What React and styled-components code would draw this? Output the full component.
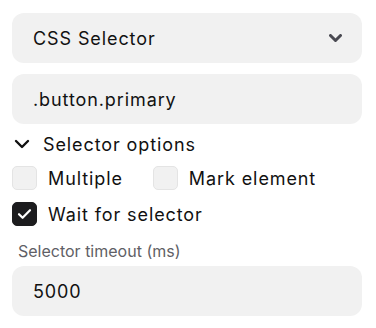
import React, { useState } from "react";
import styled, { createGlobalStyle } from "styled-components";

const GlobalStyle = createGlobalStyle`
  body {
    margin: 0;
    background: #ffffff;
    font-family: Inter, "Noto Sans", sans-serif;
    color: #111111;
  }
`;

const Panel = styled.div`
  width: 350px;
  padding: 13px 0 0 12px;
  display: flex;
  flex-direction: column;
`;

const Field = styled.div`
  height: 50px;
  border-radius: 12px;
  background: #f1f1f1;
  display: flex;
  align-items: center;
  justify-content: space-between;
  padding: 0 20px 0 21px;
  box-sizing: border-box;
  font-size: 18px;
  letter-spacing: 0.9px;
  color: #111;
  margin-bottom: ${(p) => p.$gap || 0}px;
`;

const Caret = styled.svg`
  width: 13px;
  height: 9px;
  color: #4a4a52;
`;

const OptionsToggle = styled.div`
  display: flex;
  align-items: center;
  gap: 13px;
  height: 24px;
  margin-top: 8px;
  padding-left: 2px;
  font-size: 18px;
  letter-spacing: 0.9px;
  color: #111;
`;

const Row = styled.div`
  display: flex;
  align-items: center;
  gap: 30px;
  margin-top: ${(p) => p.$top}px;
`;

const Check = styled.label`
  display: flex;
  align-items: center;
  gap: 11px;
  font-size: 18px;
  letter-spacing: 0.9px;
  color: #111;
`;

const Box = styled.span`
  width: 25px;
  height: 24px;
  box-sizing: border-box;
  border-radius: 5px;
  display: flex;
  align-items: center;
  justify-content: center;
  background: ${(p) => (p.$on ? "#1c1c1e" : "#f1f1f1")};
  border: 1px solid ${(p) => (p.$on ? "#1c1c1e" : "#e4e4e4")};
`;

const Label = styled.div`
  margin-top: 15px;
  margin-bottom: 3px;
  padding-left: 6px;
  font-size: 16px;
  color: #5f5f66;
  height: 22px;
`;

const Chevron = () => (
  <svg width="16" height="10" viewBox="0 0 16 10" fill="none">
    <path d="M2 2l6 6 6-6" stroke="#111" strokeWidth="2.4" strokeLinecap="round" strokeLinejoin="round" />
  </svg>
);

const Tick = () => (
  <svg width="15" height="12" viewBox="0 0 15 12" fill="none">
    <path d="M2 6.2l3.6 3.6L13 2.2" stroke="#fff" strokeWidth="2.2" strokeLinecap="round" strokeLinejoin="round" />
  </svg>
);

const CheckItem = ({ on, children }) => (
  <Check>
    <Box $on={on}>{on && <Tick />}</Box>
    {children}
  </Check>
);

export default function App() {
  const [wait] = useState(true);
  return (
    <>
      <GlobalStyle />
      <Panel>
        <Field $gap={11}>
          CSS Selector
          <Caret viewBox="0 0 13 9">
            <path d="M1.5 1.5l5 5 5-5" stroke="currentColor" strokeWidth="3" fill="none" strokeLinecap="round" strokeLinejoin="round" />
          </Caret>
        </Field>
        <Field>.button.primary</Field>
        <OptionsToggle>
          <Chevron />
          Selector options
        </OptionsToggle>
        <Row $top={10}>
          <CheckItem>Multiple</CheckItem>
          <CheckItem>Mark element</CheckItem>
        </Row>
        <Row $top={12}>
          <CheckItem on={wait}>Wait for selector</CheckItem>
        </Row>
        <Label>Selector timeout (ms)</Label>
        <Field>5000</Field>
      </Panel>
    </>
  );
}
